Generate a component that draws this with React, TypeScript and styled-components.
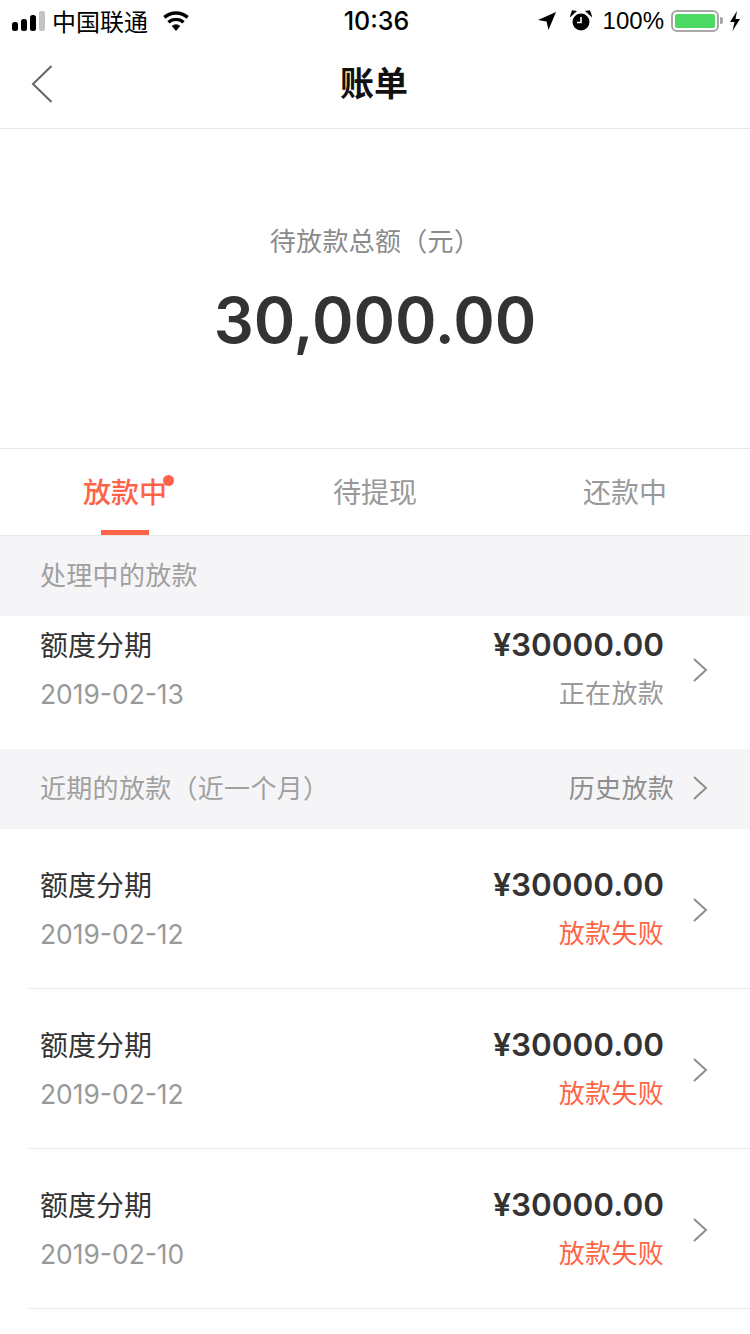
import { FC } from "react";
import styled, { createGlobalStyle } from "styled-components";

const GlobalStyle = createGlobalStyle`
    html, body {
        margin: 0;
        padding: 0;
        background: #fff;
    }
    body {
        font-family: Inter, "Noto Sans CJK SC", sans-serif;
    }
`;

const ORANGE = "#ff6347";

interface Bill {
    date: string;
    status: string;
    failed?: boolean;
}

const historyBills: Bill[] = [
    { date: "2019-02-12", status: "放款失败", failed: true },
    { date: "2019-02-12", status: "放款失败", failed: true },
    { date: "2019-02-10", status: "放款失败", failed: true },
];

const Chevron: FC = () => (
    <ChevronIcon width="16" height="26" viewBox="0 0 16 26">
        <path d="M2 2 L14 13 L2 24" fill="none" stroke="#8e8e8e" strokeWidth="2" />
    </ChevronIcon>
);

const BillItem: FC<{ bill: Bill; compact?: boolean }> = ({ bill, compact }) => (
    <BillRow $compact={compact}>
        <BillLeft>
            <BillName>额度分期</BillName>
            <BillDate>{bill.date}</BillDate>
        </BillLeft>
        <BillRight>
            <BillAmount>¥30000.00</BillAmount>
            <BillStatus $failed={bill.failed}>{bill.status}</BillStatus>
        </BillRight>
        <Chevron />
    </BillRow>
);

const App: FC = () => {
    return (
        <Page>
            <GlobalStyle />
            <StatusBar>
                <StatusLeft>
                    <svg width="33" height="20" viewBox="0 0 33 20">
                        <rect x="0" y="11" width="6" height="9" rx="2.5" fill="#000" />
                        <rect x="9" y="8" width="6" height="12" rx="2.5" fill="#000" />
                        <rect x="18" y="4" width="6" height="16" rx="2.5" fill="#000" />
                        <rect x="27" y="0" width="6" height="20" rx="2" fill="#c4c4c4" />
                    </svg>
                    <Carrier>中国联通</Carrier>
                    <svg width="28" height="20" viewBox="0 0 28 20">
                        <path d="M14 20 L9.8 15 A6.5 6.5 0 0 1 18.2 15 Z" fill="#000" />
                        <path d="M7.5 12.5 A10 10 0 0 1 20.5 12.5 L22.7 10 A13.6 13.6 0 0 0 5.3 10 Z" fill="#000" />
                        <path d="M3.5 7.7 A16 16 0 0 1 24.5 7.7 L26.8 5 A19.6 19.6 0 0 0 1.2 5 Z" fill="#000" />
                    </svg>
                </StatusLeft>
                <Clock>10:36</Clock>
                <StatusRight>
                    <svg width="20" height="20" viewBox="0 0 20 20">
                        <path d="M19 1 L11.5 19 L9.5 10.5 L1 9 Z" fill="#000" />
                    </svg>
                    <AlarmWrap>
                        <svg width="22" height="22" viewBox="0 0 22 22">
                            <circle cx="11" cy="12" r="8.5" fill="#000" />
                            <path d="M11 7 V12.5 H7" fill="none" stroke="#fff" strokeWidth="1.6" />
                            <path d="M1 5.5 L5.5 1.5 L2.5 1 Z M21 5.5 L16.5 1.5 L19.5 1 Z" fill="#000" stroke="#000" strokeWidth="1.4" />
                        </svg>
                    </AlarmWrap>
                    <Percent>100%</Percent>
                    <Battery>
                        <BatteryFill />
                    </Battery>
                    <BatteryCap />
                    <svg width="12" height="20" viewBox="0 0 12 20">
                        <path d="M8 0 L1 11 H5.5 L3.5 20 L11 8 H6.5 Z" fill="#000" />
                    </svg>
                </StatusRight>
            </StatusBar>
            <NavBar>
                <BackButton>
                    <svg width="22" height="38" viewBox="0 0 22 38">
                        <path d="M20.5 1 L2 19 L20.5 37" fill="none" stroke="#666" strokeWidth="2" />
                    </svg>
                </BackButton>
                <NavTitle>账单</NavTitle>
            </NavBar>
            <Hero>
                <HeroLabel>待放款总额（元）</HeroLabel>
                <HeroValue>30,000.00</HeroValue>
            </Hero>
            <Tabs>
                <Tab $active>
                    <TabLabel>
                        放款中
                        <TabDot />
                    </TabLabel>
                    <TabUnderline />
                </Tab>
                <Tab>
                    <TabLabel>待提现</TabLabel>
                </Tab>
                <Tab>
                    <TabLabel>还款中</TabLabel>
                </Tab>
            </Tabs>
            <SectionHeader>处理中的放款</SectionHeader>
            <BillItem bill={{ date: "2019-02-13", status: "正在放款" }} compact />
            <SectionHeader>
                近期的放款（近一个月）
                <HistoryLink>
                    历史放款
                    <Chevron />
                </HistoryLink>
            </SectionHeader>
            {historyBills.map((bill, i) => (
                <BillItem key={i} bill={bill} />
            ))}
        </Page>
    );
};

const Page = styled.div`
    width: 750px;
    height: 1334px;
    overflow: hidden;
    background: #fff;
    color: #333;
`;

const StatusBar = styled.div`
    height: 41px;
    display: grid;
    grid-template-columns: 1fr auto 1fr;
    align-items: center;
    padding: 0 9px 0 12px;
    color: #000;
`;

const StatusLeft = styled.div`
    display: flex;
    align-items: center;
    gap: 8px;
`;

const Carrier = styled.span`
    font-size: 24px;
    margin-left: -1px;
    margin-right: 6px;
`;

const Clock = styled.span`
    font-size: 25px;
    font-weight: 500;
`;

const StatusRight = styled.div`
    display: flex;
    align-items: center;
    justify-content: flex-end;
`;

const AlarmWrap = styled.span`
    display: flex;
    margin: 0 11px 0 13px;
`;

const Percent = styled.span`
    font-family: "Liberation Sans", sans-serif;
    font-size: 24px;
    margin-right: 7px;
`;

const Battery = styled.div`
    width: 48px;
    height: 22px;
    box-sizing: border-box;
    border: 2px solid #a8a8a8;
    border-radius: 6px;
    padding: 2px;
`;

const BatteryFill = styled.div`
    height: 100%;
    background: #4cd964;
    border-radius: 2px;
`;

const BatteryCap = styled.div`
    width: 3px;
    height: 7px;
    background: #a8a8a8;
    border-radius: 0 2px 2px 0;
    margin: 0 6px 0 1px;
`;

const NavBar = styled.div`
    position: relative;
    height: 88px;
    box-sizing: border-box;
    border-bottom: 1px solid #e8e8e8;
    display: flex;
    align-items: center;
    justify-content: center;
    padding: 0 2px 6px 0;
`;

const BackButton = styled.div`
    position: absolute;
    left: 31px;
    top: 24px;
    display: flex;
`;

const NavTitle = styled.div`
    font-size: 34px;
    font-weight: 700;
    color: #111;
`;

const Hero = styled.div`
    height: 320px;
    box-sizing: border-box;
    border-bottom: 1px solid #e8e8e8;
    display: flex;
    flex-direction: column;
    align-items: center;
    padding-top: 94px;
`;

const HeroLabel = styled.div`
    font-size: 26px;
    line-height: 38px;
    letter-spacing: 0.3px;
    color: #8a8a8a;
`;

const HeroValue = styled.div`
    font-size: 63px;
    line-height: 84px;
    font-weight: 600;
    color: #333;
    margin-top: 17px;
`;

const Tabs = styled.div`
    height: 87px;
    box-sizing: border-box;
    border-bottom: 1px solid #e8e8e8;
    display: grid;
    grid-template-columns: repeat(3, 1fr);
`;

const Tab = styled.div<{ $active?: boolean }>`
    position: relative;
    display: flex;
    align-items: flex-start;
    justify-content: center;
    padding-top: 23px;
    font-size: 28px;
    line-height: 42px;
    font-weight: ${(props) => (props.$active ? 500 : 400)};
    color: ${(props) => (props.$active ? ORANGE : "#999")};
`;

const TabLabel = styled.span`
    position: relative;
`;

const TabDot = styled.i`
    position: absolute;
    right: -7px;
    top: 3px;
    width: 11px;
    height: 11px;
    border-radius: 50%;
    background: ${ORANGE};
`;

const TabUnderline = styled.div`
    position: absolute;
    left: 50%;
    bottom: 0;
    width: 48px;
    height: 5px;
    margin-left: -24px;
    background: ${ORANGE};
`;

const SectionHeader = styled.div`
    height: 80px;
    box-sizing: border-box;
    display: flex;
    align-items: center;
    justify-content: space-between;
    padding: 0 42px 6px 40px;
    background: #f5f5f7;
    font-size: 26px;
    letter-spacing: 0.3px;
    color: #a0a0a0;
`;

const HistoryLink = styled.div`
    display: flex;
    align-items: center;
    gap: 18px;
    color: #8e8e8e;

    svg {
        margin-top: 4px;
    }
`;

const BillRow = styled.div<{ $compact?: boolean }>`
    height: ${(props) => (props.$compact ? "133px" : "160px")};
    box-sizing: border-box;
    margin-left: 29px;
    padding: ${(props) => (props.$compact ? "9px 42px 35px 11px" : "36px 42px 34px 11px")};
    display: flex;
    align-items: center;
    border-bottom: ${(props) => (props.$compact ? "0" : "1px solid #e8e8e8")};
`;

const BillLeft = styled.div`
    flex: 1;
`;

const BillName = styled.div`
    font-size: 28px;
    line-height: 40px;
    position: relative;
    top: 1px;
    color: #333;
`;

const BillDate = styled.div`
    font-size: 26.4px;
    line-height: 40px;
    margin-top: 9px;
    color: #999;
`;

const BillRight = styled.div`
    display: flex;
    flex-direction: column;
    align-items: flex-end;
    margin-right: 28px;
`;

const BillAmount = styled.div`
    font-size: 31.5px;
    line-height: 40px;
    font-weight: 600;
    color: #333;
`;

const BillStatus = styled.div<{ $failed?: boolean }>`
    font-size: 26px;
    line-height: 40px;
    letter-spacing: 0.3px;
    margin-top: 9px;
    color: ${(props) => (props.$failed ? ORANGE : "#999")};
`;

const ChevronIcon = styled.svg`
    flex: none;
`;

export default App;
